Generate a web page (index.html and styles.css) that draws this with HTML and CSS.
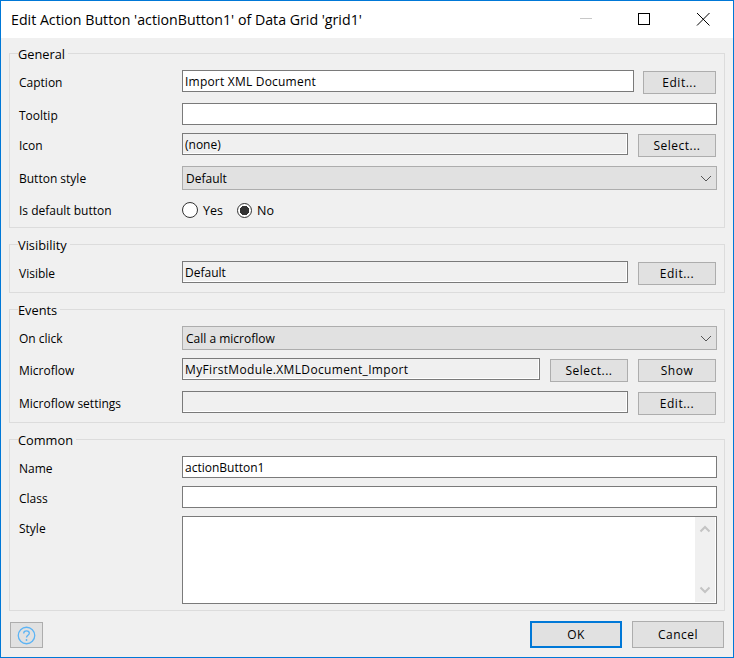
FILE: index.html
```html
<!DOCTYPE html>
<html lang="en">
<head>
<meta charset="utf-8">
<title>Edit Action Button</title>
<link rel="stylesheet" href="styles.css">
</head>
<body>
<div class="window">
  <header class="titlebar">
    <div class="title">Edit Action Button 'actionButton1' of Data Grid 'grid1'</div>
    <div class="controls">
      <svg class="ctl" width="46" height="26" viewBox="0 0 46 26"><path d="M18 12.500H30" stroke="#c8c8c8" fill="none"/></svg>
      <svg class="ctl" width="46" height="26" viewBox="0 0 46 26"><rect x="17.500" y="7.500" width="11" height="11" stroke="#000" fill="none"/></svg>
      <svg class="ctl" width="46" height="26" viewBox="0 0 46 26"><path d="M17 7L29.500 19.500M29.500 7L17 19.500" stroke="#000" fill="none"/></svg>
    </div>
  </header>
  <main class="main">
    <section class="group">
      <div class="legend">General</div>
      <div class="row gap9"><span class="label">Caption</span><div class="field spaced-s">Import XML Document</div><button class="btn edit">Edit...</button></div>
      <div class="row"><span class="label">Tooltip</span><div class="field wide"></div></div>
      <div class="row gap9"><span class="label">Icon</span><div class="field ro">(none)</div><button class="btn pick">Select...</button></div>
      <div class="row gap10"><span class="label">Button style</span><div class="select wide"><span>Default</span><svg width="12" height="7" viewBox="0 0 12 7"><path d="M1 1L6 6L11 1" stroke="#555" fill="none"/></svg></div></div>
      <div class="row radios"><span class="label">Is default button</span>
        <span class="radio"></span><span class="radio-text">Yes</span>
        <span class="radio on"></span><span class="radio-text">No</span>
      </div>
    </section>
    <section class="group">
      <div class="legend">Visibility</div>
      <div class="row"><span class="label">Visible</span><div class="field ro">Default</div><button class="btn pick">Edit...</button></div>
    </section>
    <section class="group">
      <div class="legend">Events</div>
      <div class="row"><span class="label">On click</span><div class="select wide"><span>Call a microflow</span><svg width="12" height="7" viewBox="0 0 12 7"><path d="M1 1L6 6L11 1" stroke="#555" fill="none"/></svg></div></div>
      <div class="row gap9"><span class="label">Microflow</span><div class="field ro spaced-m">MyFirstModule.XMLDocument_Import</div><button class="btn pick">Select...</button><button class="btn pick">Show</button></div>
      <div class="row"><span class="label">Microflow settings</span><div class="field ro"></div><button class="btn pick">Edit...</button></div>
    </section>
    <section class="group">
      <div class="legend">Common</div>
      <div class="row"><span class="label">Name</span><div class="field wide">actionButton1</div></div>
      <div class="row"><span class="label">Class</span><div class="field wide"></div></div>
      <div class="row last"><span class="label">Style</span>
        <div class="field wide area">
          <div class="scrollbar">
            <svg width="12" height="8" viewBox="0 0 12 8"><path d="M1.500 6.500L6 2L10.500 6.500" stroke="#c4c4c4" stroke-width="2" fill="none"/></svg>
            <svg width="12" height="8" viewBox="0 0 12 8"><path d="M1.500 1.500L6 6L10.500 1.500" stroke="#c4c4c4" stroke-width="2" fill="none"/></svg>
          </div>
        </div>
      </div>
    </section>
  </main>
  <footer class="footer">
    <button class="btn help" aria-label="Help">
      <svg width="19" height="19" viewBox="0 0 19 19"><circle cx="9.500" cy="9.500" r="8.250" stroke="#5cb4f5" stroke-width="1.300" fill="none"/><path d="M6.700 7.400C6.700 5.700 8 4.900 9.500 4.900C11 4.900 12.300 5.800 12.300 7.200C12.300 9.200 9.500 9.300 9.500 11.500" stroke="#5cb4f5" stroke-width="1.300" fill="none"/><circle cx="9.500" cy="14" r="0.900" fill="#5cb4f5"/></svg>
    </button>
    <button class="btn action primary">OK</button>
    <button class="btn action">Cancel</button>
  </footer>
</div>
</body>
</html>
```
FILE: styles.css
```css
* { box-sizing: border-box; }
html, body { margin: 0; height: 100%; }
body { font-family: "Open Sans", "Liberation Sans", sans-serif; font-size: 12px; color: #000; }

.window {
  width: 734px; height: 658px;
  border: 1px solid #0078d7;
  background: #f0f0f0;
  display: flex; flex-direction: column;
}

.titlebar {
  height: 37px; flex: none;
  background: #fff;
  display: flex; justify-content: space-between;
}
.title { font-size: 14.200px; line-height: 20px; padding: 9px 0 0 10px; }
.controls { display: flex; padding-top: 5px; gap: 13px; margin-right: 7px; }
.ctl { display: block; }

.main { padding: 15px 8px 0; display: flex; flex-direction: column; gap: 16px; }

.group { border: 1px solid #dcdcdc; padding: 0 7px 0 9px; }
.legend {
  width: fit-content; height: 16px;
  margin: -8px 0 8px -1px; padding: 0 3px 0 0;
  background: #f0f0f0; line-height: 16px; font-size: 12.800px;
}

.row { display: flex; align-items: flex-start; margin-bottom: 8px; }
.row.gap9 { margin-bottom: 9px; }
.row.gap10 { margin-bottom: 10px; }
.row:last-child { margin-bottom: 7px; }
.row.last { margin-bottom: 6px; }
.label { width: 163px; height: 22px; flex: none; line-height: 19px; padding-top: 3px; }

.field {
  flex: 1 1 0; height: 22px; min-width: 0;
  border: 1px solid #7a7a7a; background: #fff;
  padding: 1px 2px 0; line-height: 19px;
  white-space: nowrap; overflow: hidden;
}
.field.ro { background: #f0f0f0; box-shadow: inset -1px -1px 0 #fff; }
.field.spaced-s { letter-spacing: 0.210px; }
.field.spaced-m { letter-spacing: 0.340px; }
.field.area { height: 88px; display: flex; justify-content: flex-end; padding: 0 1px 1px 0; }

.select {
  flex: 1 1 0; height: 24px;
  border: 1px solid #adadad; background: #e1e1e1;
  padding: 0 4px 0 3px; line-height: 20px;
  display: flex; justify-content: space-between; align-items: center;
}
.select span { padding-top: 2px; }

.btn {
  height: 23px; margin: 1px 1px 0 0;
  border: 1px solid #adadad; background: #e1e1e1; color: #000;
  font: inherit; padding: 0; line-height: 20px; letter-spacing: 0.500px;
  flex: none;
}
.btn.edit { width: 73px; margin-left: 9px; }
.btn.pick { width: 78px; margin-left: 10px; }
.btn.pick + .btn.pick { margin-left: 9px; }

.radios { align-items: center; height: 20px; }
.radios .label { height: 20px; line-height: 20px; padding-top: 1px; }
.radio {
  width: 16px; height: 16px; flex: none;
  border: 1px solid #333; border-radius: 50%; background: #fff;
}
.radio.on {
  width: 15px; height: 15px;
  background: radial-gradient(circle, #333 0 4.500px, #fff 5px);
}
.radio-text { margin: 0 14px 0 5px; font-size: 12.500px; }

.scrollbar {
  width: 20px; background: #f0f0f0;
  display: flex; flex-direction: column; justify-content: space-between; align-items: center;
  padding: 8px 0 8px;
}
.scrollbar svg { display: block; }

.footer {
  margin-top: 10px; padding: 0 9px;
  display: flex; align-items: flex-start; gap: 10px;
}
.btn.help { width: 33px; height: 26px; margin: 1px auto 0 0; display: flex; align-items: center; justify-content: center; }
.btn.action { width: 92px; height: 27px; margin: 0; }
.btn.primary { border: 2px solid #0078d7; }
```
